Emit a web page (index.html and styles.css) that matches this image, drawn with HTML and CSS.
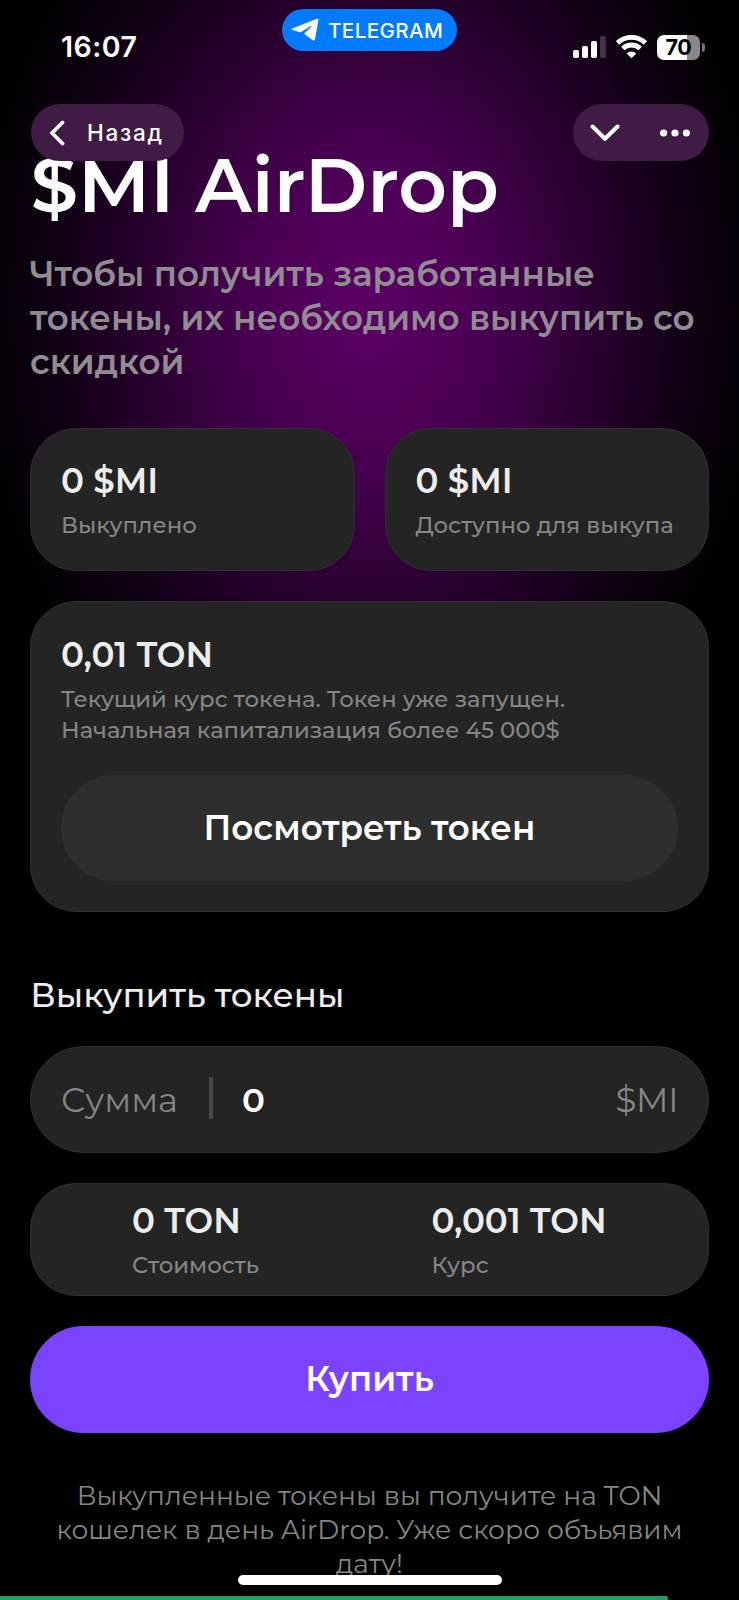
FILE: index.html
```
<!DOCTYPE html>
<html lang="ru">
<head>
<meta charset="utf-8">
<title>$MI AirDrop</title>
<link rel="stylesheet" href="styles.css">
</head>
<body>
<div class="screen">
  <header class="status">
    <span class="clock">16:07</span>
    <div class="app-pill">
      <svg width="28" height="24" viewBox="0 0 28 24"><path d="M1.3 10.600 25.300.9c1.600-.6 2.400.1 2.100 1.700l-3.300 18.200c-.3 1.700-1.300 2.100-2.700 1.100l-7.500-5.500c-.7-.5-.7-1 0-1.600L20 9c1.100-1.100.5-1.600-.7-.8l-8.700 5.500c-.8.5-1.600.6-2.500.3l-6.700-2.100c-1-.4-1-1 .1-1.300z" fill="#fff"/></svg>
      <span>TELEGRAM</span>
    </div>
    <div class="indicators">
      <svg width="33" height="24" viewBox="0 0 33 24" fill="#fff"><rect x="0" y="15" width="6" height="8" rx="1.700"/><rect x="9" y="11" width="6" height="12" rx="1.700"/><rect x="18" y="6" width="6" height="17" rx="1.700"/><rect x="27" y="1" width="6" height="22" rx="1.700" opacity=".2"/></svg>
      <svg width="31" height="24" viewBox="0 0 31 24" fill="none" stroke="#fff" stroke-width="4.800"><path d="M1.600 7.900a20 20 0 0 1 27.800 0"/><path d="M6.800 13.500a12.600 12.600 0 0 1 17.400 0"/><path d="M15.500 23.200 10.700 18.500a6.900 6.900 0 0 1 9.600 0z" fill="#fff" stroke="none"/></svg>
      <div class="battery"><span>70</span></div>
    </div>
  </header>

  <nav class="nav">
    <button class="pill back">
      <svg width="16" height="26" viewBox="0 0 16 26"><path d="M13.500 2.500 3 13 13.500 23.500" fill="none" stroke="#fff" stroke-width="3.800" stroke-linecap="round" stroke-linejoin="round"/></svg>
      <span>Назад</span>
    </button>
    <div class="pill menu">
      <svg width="30" height="18" viewBox="0 0 30 18"><path d="M2.500 2.500 15 14.800 27.500 2.500" fill="none" stroke="#fff" stroke-width="4" stroke-linecap="round" stroke-linejoin="round"/></svg>
      <svg width="30" height="8" viewBox="0 0 30 8" fill="#fff"><circle cx="3.600" cy="4" r="3.600"/><circle cx="15" cy="4" r="3.600"/><circle cx="26.400" cy="4" r="3.600"/></svg>
    </div>
  </nav>

  <main class="content">
    <h1 class="title">$MI AirDrop</h1>
    <p class="subtitle">Чтобы получить заработанные токены, их необходимо выкупить со скидкой</p>

    <section class="pair">
      <div class="card"><div class="value">0 $MI</div><div class="label">Выкуплено</div></div>
      <div class="card"><div class="value">0 $MI</div><div class="label">Доступно для выкупа</div></div>
    </section>

    <section class="card rate">
      <div class="value">0,01 TON</div>
      <div class="label">Текущий курс токена. Токен уже запущен.<br>Начальная капитализация более 45 000$</div>
      <button class="btn btn-dark">Посмотреть токен</button>
    </section>

    <h2 class="heading">Выкупить токены</h2>
    <div class="field">
      <span class="field-name">Сумма</span>
      <span class="divider"></span>
      <span class="amount">0</span>
      <span class="unit">$MI</span>
    </div>
    <div class="card summary">
      <div><div class="value">0 TON</div><div class="label">Стоимость</div></div>
      <div><div class="value">0,001 TON</div><div class="label">Курс</div></div>
    </div>
    <button class="btn btn-buy">Купить</button>
    <p class="note">Выкупленные токены вы получите на TON кошелек в день AirDrop. Уже скоро объьявим дату!</p>
  </main>

  <div class="home-bar"></div>
  <div class="progress"></div>
</div>
</body>
</html>
```
FILE: styles.css
```
* { box-sizing: border-box; margin: 0; padding: 0; }

body { background: #000; }

button { border: 0; color: inherit; }

.screen {
  position: relative;
  width: 739px;
  height: 1600px;
  overflow: hidden;
  background: radial-gradient(ellipse 410px 540px at 370px 305px, #5a0064 0%, #4f0058 22%, #3c0044 40%, #230029 60%, #0d0010 80%, #000 100%) #000;
  color: #fff;
  font-family: Montserrat, Inter, sans-serif;
}

/* Status bar */
.status {
  display: grid;
  grid-template-columns: 251px 175px 1fr;
  height: 104px;
  padding: 9px 34px 0 31px;
  font-family: Inter, sans-serif;
}
.clock {
  padding: 20px 0 0 30px;
  font-size: 28.5px;
  line-height: 36px;
  font-weight: 600;
  letter-spacing: 0.5px;
}
.app-pill {
  display: flex;
  align-items: center;
  gap: 9px;
  height: 42px;
  padding-left: 9px;
  border-radius: 21px;
  background: #007aff;
  font-size: 20.6px;
  font-weight: 550;
  letter-spacing: 0.4px;
}
.indicators {
  display: flex;
  align-items: center;
  justify-content: flex-end;
  gap: 10px;
  height: 26px;
  margin-top: 25px;
}
.battery {
  position: relative;
  width: 43px;
  height: 25px;
  margin-right: 5px;
  border-radius: 7px;
  background: linear-gradient(90deg, #fff 30px, #8b858d 30px);
  color: #000;
  font-size: 21.5px;
  line-height: 25px;
  font-weight: 700;
  text-align: center;
  letter-spacing: -0.4px;
}
.battery::after {
  content: "";
  position: absolute;
  left: 45px;
  top: 8px;
  width: 3px;
  height: 9px;
  border-radius: 0 4px 4px 0;
  background: #77717a;
}

/* Floating navigation */
.nav {
  position: relative;
  z-index: 2;
  display: flex;
  justify-content: space-between;
  padding: 0 30px 0 31px;
}
.pill {
  display: flex;
  align-items: center;
  height: 57px;
  border-radius: 28.5px;
  background: #3f1b45;
}
.back {
  width: 153px;
  padding-left: 18px;
  gap: 22px;
  font: 550 22.5px/28px Inter, sans-serif;
  letter-spacing: 1.75px;
}
.menu {
  width: 136px;
  padding: 0 19px 0 17px;
  justify-content: space-between;
}

/* Content */
.content {
  display: flex;
  flex-direction: column;
  margin-top: -21px;
  padding: 0 30px 0 30px;
}
.title {
  padding-left: 0.5px;
  font-size: 75.6px;
  line-height: 90px;
  font-weight: 600;
}
.subtitle {
  margin-top: 23px;
  color: #918c92;
  font-size: 34.1px;
  line-height: 43.75px;
  font-weight: 600;
}
.pair {
  display: grid;
  grid-template-columns: 1fr 1fr;
  gap: 30px;
  margin-top: 43.4px;
}
.card {
  padding: 30.3px 30px 0;
  border: 1px solid #303030;
  border-radius: 46px;
  background: #242424;
}
.value {
  color: #ededed;
  font-size: 34.1px;
  line-height: 44px;
  font-weight: 600;
}
.label {
  margin-top: 7.2px;
  color: #868686;
  font-size: 22.74px;
  line-height: 30.3px;
  font-weight: 500;
}
.pair .card { height: 143.5px; border-color: #352a37; }
.pair .label { white-space: nowrap; }
.rate { height: 311px; margin-top: 30px; }
.rate .value { padding-top: 0.6px; }
.btn {
  display: block;
  width: 100%;
  height: 106.5px;
  border-radius: 54px;
  font: 600 34.1px/44px Montserrat, Inter, sans-serif;
}
.btn-dark { margin-top: 30px; background: #2e2e2e; }
.heading {
  margin-top: 60.5px;
  padding-left: 0.3px;
  color: #ededed;
  font-size: 34.1px;
  line-height: 44px;
  font-weight: 500;
}
.field {
  display: flex;
  align-items: center;
  height: 107px;
  margin-top: 29.5px;
  padding: 0 30px;
  border: 1px solid #303030;
  border-radius: 54px;
  background: #242424;
  font-size: 34px;
  line-height: 44px;
}
.field-name { width: 148px; color: #868686; }
.divider {
  width: 4px;
  height: 42px;
  margin: -4px 29px 0 0;
  background: #484848;
}
.amount { flex: 1; font-weight: 600; }
.unit { color: #868686; letter-spacing: -0.4px; }
.summary {
  display: grid;
  grid-template-columns: 299.5px 1fr;
  height: 113.5px;
  margin-top: 29.5px;
  padding: 15.5px 0 0 101px;
}
.btn-buy { margin-top: 30px; background: #7b42ff; }
.note {
  margin-top: 46px;
  color: #868686;
  font-size: 26.53px;
  line-height: 34.1px;
  font-weight: 400;
  text-align: center;
}

/* System overlays */
.home-bar {
  position: absolute;
  left: 238px;
  top: 1575px;
  width: 264px;
  height: 10px;
  border-radius: 5px;
  background: #fff;
}
.progress {
  position: absolute;
  left: 0;
  bottom: 0;
  width: 668px;
  height: 4px;
  border-radius: 0 2px 0 0;
  background: #259b63;
}
```
